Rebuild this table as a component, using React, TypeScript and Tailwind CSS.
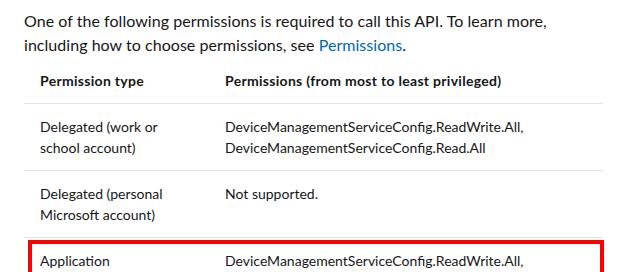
const rows = [
  {
    type: "Delegated (work or school account)",
    perms: ["DeviceManagementServiceConfig.ReadWrite.All,", "DeviceManagementServiceConfig.Read.All"],
  },
  {
    type: "Delegated (personal Microsoft account)",
    perms: ["Not supported."],
  },
  {
    type: "Application",
    perms: ["DeviceManagementServiceConfig.ReadWrite.All,", "DeviceManagementServiceConfig.Read.All"],
  },
];

export default function App() {
  return (
    <div className="relative w-[620px] h-[272px] overflow-hidden bg-white text-[#161616] font-['Lato',sans-serif]">
      <p className="pl-[24px] pt-[9px] pr-4 text-[16px] leading-[24px] tracking-[0.04px]">
        One of the following permissions is required to call this API. To learn more,
        <br />
        including how to choose permissions, see{" "}
        <a href="#" className="text-[#0065b3]">Permissions</a>.
      </p>

      <table className="ml-[24px] mt-px w-[579px] table-fixed border-collapse text-left text-[14px] leading-[21px]">
        <thead>
          <tr>
            <th className="w-[185px] border-b border-[#e3e3e3] px-4 py-3 font-bold tracking-[0.3px]">Permission type</th>
            <th className="border-b border-[#e3e3e3] px-4 py-3 font-bold tracking-[0.3px]">
              Permissions (from most to least privileged)
            </th>
          </tr>
        </thead>
        <tbody>
          {rows.map((row) => (
            <tr key={row.type}>
              <td className="border-b border-[#e3e3e3] px-4 py-3 align-top">{row.type}</td>
              <td className="border-b border-[#e3e3e3] px-4 py-3 align-top">
                {row.perms.map((p) => (
                  <div key={p}>{p}</div>
                ))}
              </td>
            </tr>
          ))}
        </tbody>
      </table>

      {/* highlight box over the Application row */}
      <div className="absolute left-[28px] top-[240px] h-[80px] w-[576px] border-4 border-[#ff0000]" />
    </div>
  );
}
